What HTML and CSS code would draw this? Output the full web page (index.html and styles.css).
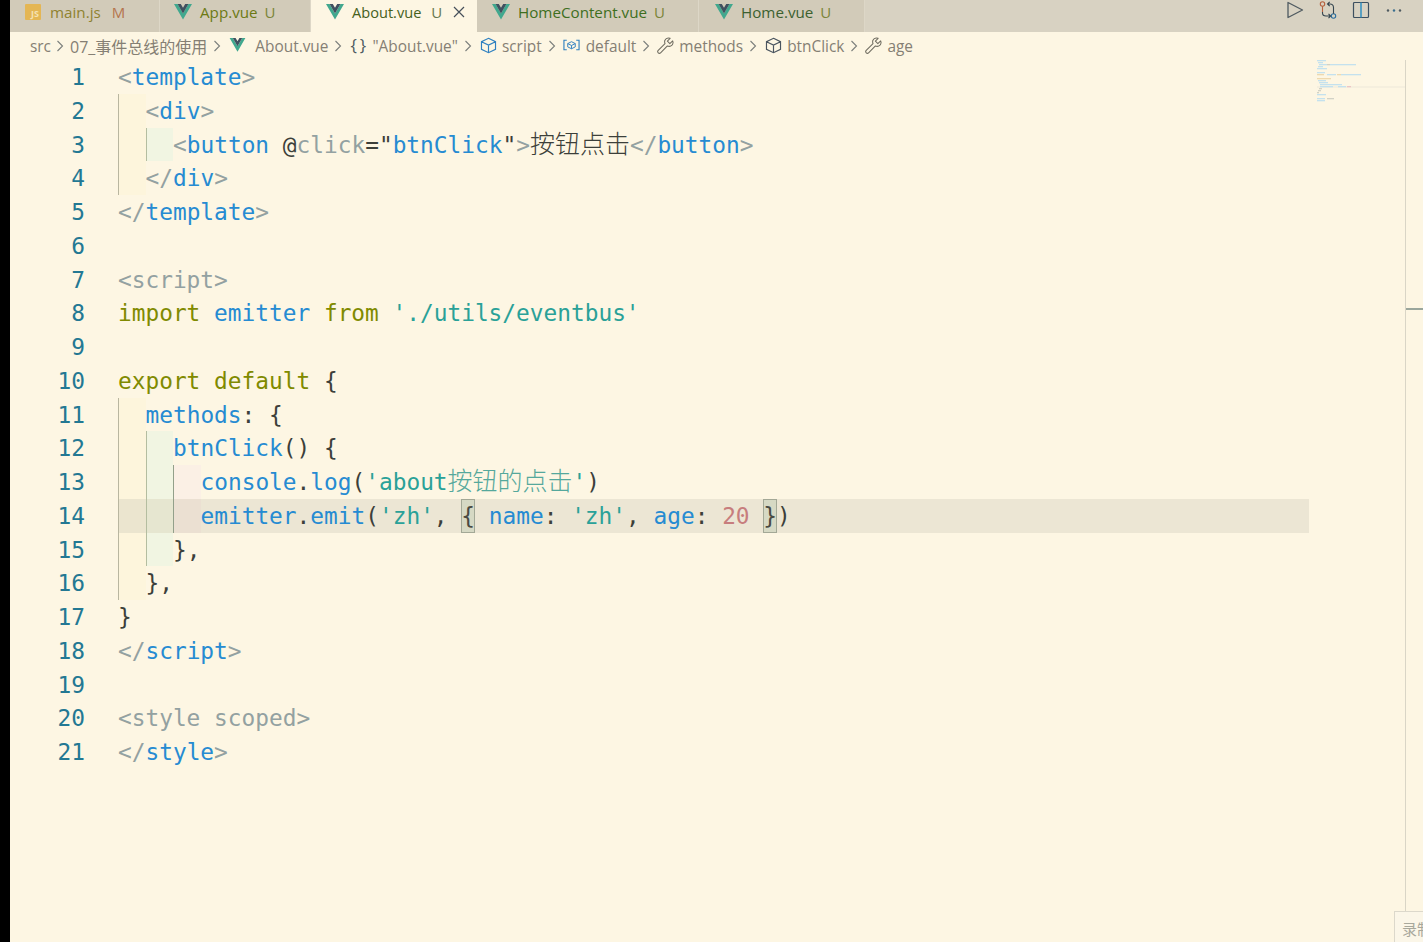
FILE: index.html
```html
<!DOCTYPE html>
<html lang="zh">
<head>
<meta charset="utf-8">
<title>About.vue</title>
<link rel="stylesheet" href="styles.css">
</head>
<body>
<svg class="defs" width="0" height="0">
  <defs>
    <symbol id="vue" viewBox="0 0 18 16">
      <path fill="#41a88e" d="M0 0h3.6L9 9.4 14.4 0H18L9 15.6z"/>
      <path fill="#40505f" d="M3.6 0h3.2L9 3.8 11.2 0h3.2L9 9.4z"/>
    </symbol>
    <symbol id="cube" viewBox="0 0 16 16">
      <path fill="none" stroke="currentColor" stroke-width="1.1" d="M8 1.2 14.6 4.4V11.6L8 14.8 1.4 11.6V4.4zM1.4 4.4 8 7.6 14.6 4.4M8 7.6V14.8"/>
    </symbol>
    <symbol id="wrench" viewBox="0 0 18 18">
      <path fill="none" stroke="currentColor" stroke-width="1.1" stroke-linejoin="round" d="M16.6 4.1 13.6 7 11 4.4 13.9 1.4C11.7.6 9.3 1.5 8.4 3.500 7.900 4.700 8 5.900 8.500 7L1.300 14.200C.6 14.900.6 16 1.300 16.700 2 17.400 3.100 17.400 3.800 16.700L11 9.500C12.100 10 13.300 10.100 14.500 9.600 16.500 8.700 17.400 6.300 16.600 4.100Z"/>
    </symbol>
    <symbol id="chev" viewBox="0 0 8 12">
      <path fill="none" stroke="currentColor" stroke-width="1.1" d="M1.500 1 6.500 6 1.500 11"/>
    </symbol>
  </defs>
</svg>

<div class="app">
  <div class="edge"></div>
  <div class="main">

    <header class="tabbar">
      <div class="tabs">
        <div class="tab tab-main">
          <span class="js-icon">JS</span>
          <span class="tab-name name-mod">main.js</span>
          <span class="tab-badge badge-mod">M</span>
        </div>
        <div class="tab tab-app">
          <svg class="tab-vue"><use href="#vue"/></svg>
          <span class="tab-name name-new">App.vue</span>
          <span class="tab-badge badge-new">U</span>
        </div>
        <div class="tab tab-about">
          <svg class="tab-vue"><use href="#vue"/></svg>
          <span class="tab-name name-active">About.vue</span>
          <span class="tab-badge badge-active">U</span>
          <svg class="tab-close" viewBox="0 0 12 12"><path d="M1 1 11 11M11 1 1 11"/></svg>
        </div>
        <div class="tab tab-content">
          <svg class="tab-vue"><use href="#vue"/></svg>
          <span class="tab-name name-new2">HomeContent.vue</span>
          <span class="tab-badge badge-new">U</span>
        </div>
        <div class="tab tab-home">
          <svg class="tab-vue"><use href="#vue"/></svg>
          <span class="tab-name name-new3">Home.vue</span>
          <span class="tab-badge badge-new">U</span>
        </div>
      </div>
      <div class="actions">
        <svg class="act" viewBox="0 0 18 18"><path fill="none" stroke="#4f5a60" stroke-width="1.300" stroke-linejoin="round" d="M2 1.500 16.500 9 2 16.500z"/></svg>
        <svg class="act" viewBox="0 0 18 18">
          <circle cx="3.500" cy="3" r="2.200" fill="none" stroke="#b5613f" stroke-width="1.100"/>
          <circle cx="14.500" cy="15" r="2.200" fill="none" stroke="#2b6f9f" stroke-width="1.100"/>
          <path fill="none" stroke="#b5613f" stroke-width="1.100" d="M3.500 5.200V11"/>
          <path fill="none" stroke="#34454f" stroke-width="1.100" d="M3.500 11V12C3.500 14 5 15 7 15H11.800M9.500 12.800 11.700 15 9.500 17.200M14.500 12.700V6.500C14.500 4 13 3 11 3H8.500M10.700 .800 8.500 3 10.700 5.200"/>
        </svg>
        <svg class="act" viewBox="0 0 18 18">
          <rect x="1.500" y="1.500" width="15" height="15" rx="1" fill="none" stroke="#3d5060" stroke-width="1.200"/>
          <path stroke="#2f8fc0" stroke-width="1.500" d="M9 1.500V16.500"/>
        </svg>
        <svg class="act" viewBox="0 0 18 18">
          <circle cx="3" cy="9.500" r="1.200" fill="#4f5a60"/>
          <circle cx="9" cy="9.500" r="1.200" fill="#3a6f8f"/>
          <circle cx="15" cy="9.500" r="1.200" fill="#4f5a60"/>
        </svg>
      </div>
    </header>

    <nav class="crumbs">
      <span class="c c-src">src</span>
      <svg class="chev"><use href="#chev"/></svg>
      <span class="c c-dir">07_事件总线的使用</span>
      <svg class="chev"><use href="#chev"/></svg>
      <svg class="c-vue"><use href="#vue"/></svg>
      <span class="c">About.vue</span>
      <svg class="chev"><use href="#chev"/></svg>
      <span class="c-braces">{}</span>
      <span class="c">"About.vue"</span>
      <svg class="chev"><use href="#chev"/></svg>
      <svg class="c-ico ico-blue"><use href="#cube"/></svg>
      <span class="c">script</span>
      <svg class="chev"><use href="#chev"/></svg>
      <svg class="c-ico-wide" viewBox="0 0 18 12">
        <path fill="none" stroke="#2f80c0" stroke-width="1.200" d="M4 1H1V11H4M14 1H17V11H14"/>
        <path fill="none" stroke="#2f80c0" stroke-width="1" d="M9 2.500 13 4.500V8L9 10 5 8V4.500zM5 4.500 9 6.500 13 4.500M9 6.500V10"/>
      </svg>
      <span class="c">default</span>
      <svg class="chev"><use href="#chev"/></svg>
      <svg class="c-ico ico-grey"><use href="#wrench"/></svg>
      <span class="c">methods</span>
      <svg class="chev"><use href="#chev"/></svg>
      <svg class="c-ico ico-dark"><use href="#cube"/></svg>
      <span class="c">btnClick</span>
      <svg class="chev"><use href="#chev"/></svg>
      <svg class="c-ico ico-grey"><use href="#wrench"/></svg>
      <span class="c">age</span>
    </nav>

    <div class="editor">
      <div class="code">
        <div class="ln"><span class="no">1</span><span class="src"><span class="p">&lt;</span><span class="t">template</span><span class="p">&gt;</span></span></div>
        <div class="ln"><span class="no">2</span><span class="src"><span class="g g1"></span><span class="p">&lt;</span><span class="t">div</span><span class="p">&gt;</span></span></div>
        <div class="ln"><span class="no">3</span><span class="src"><span class="g g1"></span><span class="g g2"></span><span class="p">&lt;</span><span class="t">button</span> <span class="d">@</span><span class="p">click</span><span class="d">="</span><span class="t">btnClick</span><span class="d">"</span><span class="p">&gt;</span><span class="zh d">按钮点击</span><span class="p">&lt;/</span><span class="t">button</span><span class="p">&gt;</span></span></div>
        <div class="ln"><span class="no">4</span><span class="src"><span class="g g1"></span><span class="p">&lt;/</span><span class="t">div</span><span class="p">&gt;</span></span></div>
        <div class="ln"><span class="no">5</span><span class="src"><span class="p">&lt;/</span><span class="t">template</span><span class="p">&gt;</span></span></div>
        <div class="ln"><span class="no">6</span><span class="src"></span></div>
        <div class="ln"><span class="no">7</span><span class="src"><span class="p">&lt;script&gt;</span></span></div>
        <div class="ln"><span class="no">8</span><span class="src"><span class="k">import</span> <span class="t">emitter</span> <span class="k">from</span> <span class="s">'./utils/eventbus'</span></span></div>
        <div class="ln"><span class="no">9</span><span class="src"></span></div>
        <div class="ln"><span class="no">10</span><span class="src"><span class="k">export default</span> <span class="d">{</span></span></div>
        <div class="ln"><span class="no">11</span><span class="src"><span class="g g1"></span><span class="t">methods</span><span class="d">: {</span></span></div>
        <div class="ln"><span class="no">12</span><span class="src"><span class="g g1"></span><span class="g g2"></span><span class="t">btnClick</span><span class="d">() {</span></span></div>
        <div class="ln"><span class="no">13</span><span class="src"><span class="g g1"></span><span class="g g2"></span><span class="g g3"></span><span class="t">console</span><span class="d">.</span><span class="t">log</span><span class="d">(</span><span class="s">'about</span><span class="zh s2">按钮的点击</span><span class="s">'</span><span class="d">)</span></span></div>
        <div class="ln ln-cur"><span class="no">14</span><span class="src"><span class="g g1"></span><span class="g g2"></span><span class="g g3"></span><span class="t">emitter</span><span class="d">.</span><span class="t">emit</span><span class="d">(</span><span class="s">'zh'</span><span class="d">, </span><span class="br">{</span> <span class="t">name</span><span class="d">: </span><span class="s">'zh'</span><span class="d">, </span><span class="t">age</span><span class="d">: </span><span class="n">20</span> <span class="br">}</span><span class="d">)</span></span></div>
        <div class="ln"><span class="no">15</span><span class="src"><span class="g g1"></span><span class="g g2"></span><span class="d">},</span></span></div>
        <div class="ln"><span class="no">16</span><span class="src"><span class="g g1"></span><span class="d">},</span></span></div>
        <div class="ln"><span class="no">17</span><span class="src"><span class="d">}</span></span></div>
        <div class="ln"><span class="no">18</span><span class="src"><span class="p">&lt;/</span><span class="t">script</span><span class="p">&gt;</span></span></div>
        <div class="ln"><span class="no">19</span><span class="src"></span></div>
        <div class="ln"><span class="no">20</span><span class="src"><span class="p">&lt;style scoped&gt;</span></span></div>
        <div class="ln"><span class="no">21</span><span class="src"><span class="p">&lt;/</span><span class="t">style</span><span class="p">&gt;</span></span></div>
      </div>

      <svg class="minimap" viewBox="0 0 96 44" width="96" height="44">
        <rect x="8" y="26" width="88" height="2" fill="#f5efde"/>
        <g fill="#c4e1ee">
          <rect x="8" y="0" width="9" height="1.300"/>
          <rect x="9" y="2" width="5" height="1.300"/>
          <rect x="10" y="4" width="8" height="1.300"/>
          <rect x="21" y="4" width="26" height="1.300"/>
          <rect x="9" y="6" width="5" height="1.300"/>
          <rect x="8" y="8" width="10" height="1.300"/>
          <rect x="8" y="12" width="8" height="1.300"/>
          <rect x="18" y="14" width="9" height="1.300"/>
          <rect x="32" y="14" width="20" height="1.300"/>
          <rect x="9" y="20" width="8" height="1.300"/>
          <rect x="10" y="22" width="9" height="1.300"/>
          <rect x="11" y="24" width="22" height="1.300"/>
          <rect x="11" y="26" width="13" height="1.300"/>
          <rect x="29" y="26" width="8" height="1.300"/>
          <rect x="8" y="34" width="9" height="1.300"/>
          <rect x="8" y="38" width="8" height="1.300"/>
          <rect x="8" y="40" width="8" height="1.300"/>
        </g>
        <g fill="#eed9ae">
          <rect x="8" y="14" width="7" height="1.300"/>
          <rect x="28" y="14" width="4" height="1.300"/>
          <rect x="8" y="18" width="14" height="1.300"/>
        </g>
        <rect x="38" y="26" width="4" height="1.300" fill="#ecc5c5"/>
        <g fill="#d2d2c6">
          <rect x="18" y="4" width="3" height="1.300"/>
          <rect x="18" y="38" width="7" height="1.300"/>
          <rect x="10" y="28" width="3" height="1.300"/>
          <rect x="9" y="30" width="3" height="1.300"/>
          <rect x="8" y="32" width="2" height="1.300"/>
        </g>
      </svg>

      <div class="ruler"><span class="ruler-mark"></span></div>
      <div class="recorder">录制</div>
    </div>
  </div>
</div>
</body>
</html>
```
FILE: styles.css
```css
* { box-sizing: border-box; }

html, body {
  margin: 0;
  height: 942px;
  overflow: hidden;
  background: #fdf6e3;
}

.defs { position: absolute; }

.app {
  display: flex;
  height: 942px;
  font-family: "Open Sans", "Noto Sans CJK SC", sans-serif;
}

.edge { width: 10px; background: #000; flex: none; }

.main {
  flex: 1;
  min-width: 0;
  display: flex;
  flex-direction: column;
}

/* tab bar */
.tabbar {
  height: 32px;
  flex: none;
  display: flex;
  justify-content: space-between;
  background: #d8d2c2;
}

.tabs { display: flex; }

.tab {
  display: flex;
  align-items: center;
  height: 32px;
  padding-bottom: 9px;
  font-size: 15.200px;
  background: #d2cbb9;
  border-right: 1px solid #ddd7c7;
}

.tab-main { width: 150px; padding-left: 15px; }
.tab-app { width: 151px; padding-left: 14px; }
.tab-about { width: 166px; padding-left: 15px; background: #fdf6e3; border-right: none; font-size: 14.600px; }
.tab-content { width: 222px; padding-left: 15px; }
.tab-home { width: 166px; padding-left: 16px; }

.js-icon {
  width: 16px;
  height: 16px;
  margin-right: 9px;
  border-radius: 1px;
  background: #e4b654;
  color: #f5e2b2;
  font-size: 9px;
  font-weight: 700;
  line-height: 20px;
  text-align: right;
  padding-right: 2px;
}

.tab-vue { width: 18px; height: 16px; margin-right: 8px; flex: none; }

.tab-name { white-space: nowrap; }
.name-mod { color: #8f8230; }
.name-new { color: #6c7a14; }
.name-active { color: #46611c; }
.name-new2 { color: #3e6f1e; }
.name-new3 { color: #3c6130; }

.tab-badge { margin-left: 7px; font-size: 15px; }
.badge-mod { margin-left: 11px; color: #b5754e; }
.badge-new { color: #7a8438; }
.badge-active { margin-left: 10px; color: #66784f; }

.tab-close {
  width: 12px;
  height: 12px;
  margin-left: 11px;
  fill: none;
  stroke: #46505a;
  stroke-width: 1.200;
}

.actions {
  display: flex;
  gap: 15px;
  padding: 1px 20px 0 0;
}

.act { width: 18px; height: 18px; }

/* breadcrumbs */
.crumbs {
  height: 28px;
  flex: none;
  display: flex;
  align-items: center;
  padding: 0 0 0 20px;
  font-size: 15.400px;
  color: #857f74;
  white-space: nowrap;
}

.c-src { margin-right: -1px; }
.c-dir { font-size: 16px; }

.chev {
  width: 8px;
  height: 12px;
  margin: 0 6px;
  color: #7b7f7c;
  flex: none;
}

.c-vue { width: 17px; height: 14px; margin: 0 9px 2px 2px; flex: none; }
.c-ico { width: 17px; height: 17px; margin: 0 5px 2px 2px; flex: none; }
.c-ico-wide { width: 17px; height: 12px; margin: 0 6px 2px 1px; flex: none; }
.c-braces { margin: 0 6px 4px 2px; width: 16px; font-size: 17px; letter-spacing: 3px; color: #4c5a60; }
.ico-blue { color: #2f80c0; }
.ico-grey { color: #6f6c60; margin-left: 1px; }
.ico-dark { color: #4a5560; }

/* editor */
.editor {
  flex: 1;
  min-height: 0;
  display: flex;
  position: relative;
}

.code {
  width: 1299px;
  flex: none;
  font-family: "DejaVu Sans Mono", "Noto Sans CJK SC", monospace;
  font-size: 22.800px;
  color: #4a4a42;
}

.ln {
  display: flex;
  height: 33.750px;
  line-height: 34px;
  white-space: pre;
}

.no {
  width: 75px;
  margin-right: 33px;
  flex: none;
  text-align: right;
  color: #237893;
}

.src { flex: 1; height: 33.750px; display: block; }

.ln-cur .src { background: #ece6d4; }

.g {
  display: inline-block;
  width: 27.500px;
  height: 33.750px;
  vertical-align: top;
  border-left: 1.500px solid #b9b6a0;
}

.g1 { background: #fdf5dc; }
.g2 { background: #f1f5e2; border-left-color: #b4bda0; }
.g3 { background: #fbf0e5; border-left-color: #93a08a; }
.ln-cur .g1 { background: #ebe5cf; }
.ln-cur .g2 { background: #e6e6d0; }
.ln-cur .g3 { background: #ebe0d2; }

.p { color: #93a1a1; }
.t { color: #268bd2; }
.d { color: #3c3f3a; }
.k { color: #808a00; }
.s { color: #2aa198; }
.s2 { color: #55a89c; }
.n { color: #c77d7d; }

.zh {
  font-size: 25px;
  line-height: 0;
  font-family: "Noto Sans CJK SC", sans-serif;
  font-weight: 300;
}

.br {
  display: inline-block;
  height: 33.750px;
  vertical-align: top;
  background: #d6d9c4;
  box-shadow: inset 0 0 0 1px #a3a896;
}

.minimap { flex: none; display: block; }

.ruler {
  flex: 1;
  border-left: 1px solid #d9d5c6;
  position: relative;
}

.ruler-mark {
  position: absolute;
  left: 0;
  right: 0;
  top: 248px;
  height: 2px;
  background: #9aa69c;
}

.recorder {
  position: absolute;
  right: 0;
  bottom: 0;
  width: 29px;
  height: 31px;
  padding: 6px 0 0 7px;
  overflow: hidden;
  white-space: nowrap;
  background: #fbf6e8;
  border: 1px solid #dcd8cb;
  border-width: 1px 0 0 1px;
  font-size: 15px;
  color: #a8a89c;
}
```
